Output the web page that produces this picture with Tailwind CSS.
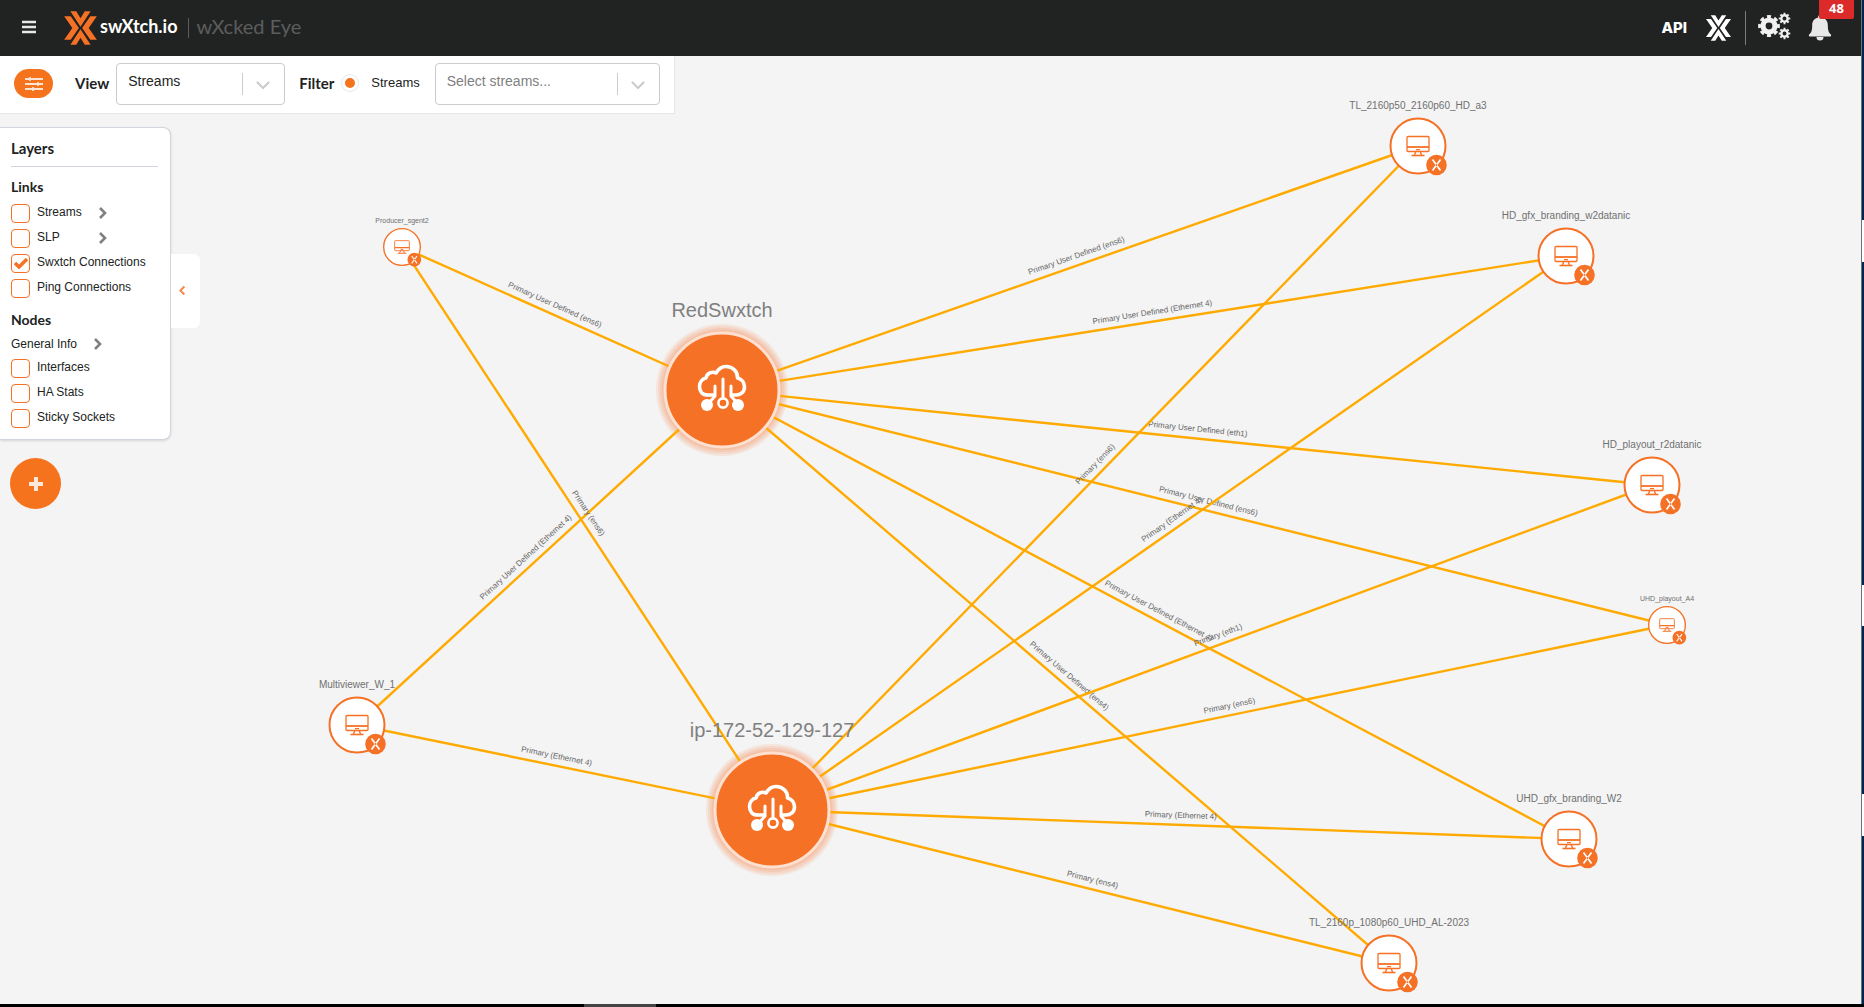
<!DOCTYPE html>
<html lang="en">
  <head>
    <meta charset="UTF-8" />
    <meta name="viewport" content="width=device-width, initial-scale=1.0" />
    <title>swXtch.io | wXcked Eye</title>
    <script src="https://cdn.jsdelivr.net/npm/@tailwindcss/browser@4"></script>
  </head>
  <body
    class="flex flex-col h-screen overflow-hidden bg-[#f4f4f4] text-[#212322] font-['Liberation_Sans',sans-serif]"
  >
    <!-- shared icons -->
    <svg class="hidden">
      <symbol id="logo" viewBox="0 0 100 104">
        <path d="M19 1h18l13 21L63 1h18L50 48z" />
        <path d="M19 103h18l13-21 13 21h18L50 56z" />
        <path d="M0 16h20l25 36-25 36H0l25-36z" />
        <path d="M100 16H80L55 52l25 36h20L75 52z" />
      </symbol>
      <symbol id="chevron" viewBox="0 0 10 14">
        <path d="M2 2l5 5-5 5" fill="none" stroke="currentColor" stroke-width="2.6" />
      </symbol>
      <symbol id="arrow-down" viewBox="0 0 20 20">
        <path
          d="M4.5 7.5l5.5 5.5 5.5-5.5"
          fill="none"
          stroke="currentColor"
          stroke-width="2.2"
          stroke-linecap="round"
        />
      </symbol>
      <symbol id="monitor" viewBox="0 0 24 22">
        <g fill="none" stroke="#f57126">
          <rect x="1" y="1.5" width="22" height="15" rx="1" stroke-width="1.3" />
          <path d="M1 12h22" stroke-width="1.8" />
          <path d="M10 16l-1.5 4M14 16l1.5 4M10 14.6h4" stroke-width="1.4" />
          <path d="M5.5 20.5h13" stroke-width="1.6" />
        </g>
      </symbol>
    </svg>

    <div class="flex flex-1 min-h-0">
      <div class="flex flex-col flex-1 min-w-0">
        <header class="flex items-center h-14 shrink-0 bg-[#212322] text-white pl-[22px] pr-[6px]">
          <button class="mr-7 mb-[2px]" aria-label="Menu">
            <svg class="w-[14px] h-[14px]" viewBox="0 0 14 14" stroke="#e8e8e8" stroke-width="2.6">
              <path d="M0 2h14M0 7h14M0 12h14" />
            </svg>
          </button>
          <svg class="w-[33px] h-[34px] fill-[#f57126]"><use href="#logo" /></svg>
          <span class="ml-[3px] mb-1 text-[18px] font-bold font-['Lato',sans-serif]">swXtch.io</span>
          <span class="ml-[10px] mr-2 w-px h-5 bg-[#5c5d5e]"></span>
          <span class="mb-1 text-[20px] text-[#5c5d5e] font-['Lato',sans-serif]">wXcked Eye</span>

          <div class="flex items-center ml-auto h-full">
            <a href="#" class="text-[15px] font-extrabold font-['Inter',sans-serif]">API</a>
            <svg class="ml-[19px] w-[25px] h-[26px] fill-white"><use href="#logo" /></svg>
            <span class="ml-[14px] mr-3 w-px h-[34px] bg-[#7a7b7b]"></span>
            <button aria-label="Settings">
              <svg class="w-[33px] h-[28px] mb-1" viewBox="0 0 33 28" fill="none" stroke="#f0f0f0">
                <circle cx="11" cy="14" r="6" stroke-width="5.2" />
                <circle cx="11" cy="14" r="9.2" stroke-width="3.4" pathLength="80" stroke-dasharray="5.5 4.5" stroke-dashoffset="2.75" />
                <circle cx="26.5" cy="6.5" r="3.2" stroke-width="2.4" />
                <circle cx="26.5" cy="6.5" r="4.8" stroke-width="2" pathLength="80" stroke-dasharray="5 5" stroke-dashoffset="2.5" />
                <circle cx="26.5" cy="21.5" r="3.2" stroke-width="2.4" />
                <circle cx="26.5" cy="21.5" r="4.8" stroke-width="2" pathLength="80" stroke-dasharray="5 5" stroke-dashoffset="2.5" />
              </svg>
            </button>
            <button class="relative ml-[9px] w-[39px] h-10 mr-4 flex items-center justify-center" aria-label="Notifications">
              <svg class="w-[24px] h-[26px]" viewBox="0 0 24 26" fill="#e8e8e8">
                <path d="M12 0c1 0 1.8.8 1.8 1.8v.7c3.7.8 6 3.7 6 7.5 0 6 1 7.5 3 9.5.5.6.8 2-.8 2H2c-1.6 0-1.3-1.4-.8-2 2-2 3-3.5 3-9.5 0-3.8 2.3-6.7 6-7.5v-.7C10.2.8 11 0 12 0z" />
                <path d="M8.5 22h7a3.5 3.5 0 0 1-7 0z" />
              </svg>
              <span class="absolute -top-2 left-[19px] w-[35px] h-[19px] rounded-b-xs bg-[#dc2a2a] text-[13px] leading-4 font-bold font-['Open_Sans',sans-serif]">48</span>
            </button>
          </div>
        </header>

        <main class="relative flex-1 min-h-0 overflow-hidden">
          <svg id="graph" class="absolute inset-0 w-full h-full">
            <g id="glows"></g>
            <g id="links"></g>
            <g id="nodes"></g>
          </svg>

          <div class="relative inline-flex items-center h-[58px] px-[14px] pb-[2px] bg-white border-b border-r border-gray-200 align-top">
            <button class="flex items-center justify-center w-[39px] h-[29px] rounded-full bg-[#f5731d]" aria-label="Filters">
              <svg class="w-[18px] h-[14px]" viewBox="0 0 18 14" stroke="#fde3d2" stroke-width="1.8">
                <path d="M0 2h18M0 7h18M0 12h18M5 0v4M13 5v4M8 10v4" />
              </svg>
            </button>
            <label for="view" class="ml-[22px] text-[15px] font-bold font-['Lato',sans-serif]">View</label>
            <div class="relative ml-[7px] w-[169px] h-[42px]">
              <select id="view" class="appearance-none w-full h-full pl-[11px] pb-1 rounded border border-[#cccccc] bg-white text-[14px]">
                <option>Streams</option>
              </select>
              <span class="absolute right-[42px] top-[10px] w-px h-[22px] bg-[#cccccc] pointer-events-none"></span>
              <svg class="absolute right-3 top-3 w-5 h-5 text-[#cccccc] pointer-events-none"><use href="#arrow-down" /></svg>
            </div>
            <span class="ml-[14px] text-[15px] font-bold font-['Lato',sans-serif]">Filter</span>
            <input
              id="byStreams"
              type="radio"
              checked
              class="appearance-none ml-2 mb-[2px] w-4 h-4 rounded-full border-3 border-white bg-[#f5731d] ring-1 ring-gray-200"
            />
            <label for="byStreams" class="ml-[13px] mb-[2px] text-[13px]">Streams</label>
            <div class="relative ml-[15px] w-[225px] h-[42px]">
              <select aria-label="Select streams" class="appearance-none w-full h-full pl-[11px] pb-1 rounded border border-[#cccccc] bg-white text-[14px] text-[#808080]">
                <option>Select streams...</option>
              </select>
              <span class="absolute right-[42px] top-[10px] w-px h-[22px] bg-[#cccccc] pointer-events-none"></span>
              <svg class="absolute right-3 top-3 w-5 h-5 text-[#cccccc] pointer-events-none"><use href="#arrow-down" /></svg>
            </div>
          </div>

          <div class="relative flex items-start mt-[13px]">
            <section class="w-[171px] pl-[11px] pr-3 pt-[10px] pb-2 rounded-r-lg bg-white border border-l-0 border-gray-300 shadow text-[12px]">
              <h2 class="pb-2 border-b border-gray-300 text-[15px] leading-5 font-bold font-['Lato',sans-serif]">Layers</h2>
              <h3 class="mt-[10px] mb-1 text-[14px] leading-5 font-bold font-['Lato',sans-serif]">Links</h3>
              <div id="linkLayers"></div>
              <h3 class="mt-[9px] text-[14px] leading-5 font-bold font-['Lato',sans-serif]">Nodes</h3>
              <button class="flex items-center mt-1 mb-[2px] h-5 gap-4">
                General Info
                <svg class="w-[10px] h-[14px] text-[#808080]"><use href="#chevron" /></svg>
              </button>
              <div id="nodeLayers"></div>
            </section>
            <button class="flex items-center justify-center mt-[127px] w-[29px] h-[74px] pr-[7px] pb-[2px] rounded-r-md bg-white" aria-label="Collapse">
              <svg class="w-[8px] h-[11px] rotate-180 text-[#f58a4b]" viewBox="0 0 10 14"><use href="#chevron" /></svg>
            </button>
          </div>

          <button class="relative flex items-center justify-center mt-[18px] ml-[10px] w-[51px] h-[51px] rounded-full bg-[#f5731d]" aria-label="Add">
            <svg class="w-[14px] h-[14px]" viewBox="0 0 14 14" stroke="#fde9dc" stroke-width="4">
              <path d="M0 7h14M7 0v14" />
            </svg>
          </button>
        </main>
      </div>

      <!-- desktop edge -->
      <div class="w-[3px] shrink-0 bg-[#00264d] border-l border-gray-500 flex flex-col">
        <span class="mt-[220px] h-[42px] bg-white"></span>
        <span class="mt-[323px] h-[41px] bg-white"></span>
        <span class="mt-[168px] h-[42px] bg-white"></span>
      </div>
    </div>
    <div class="h-[3px] shrink-0 bg-black pl-[584px]">
      <div class="w-[72px] h-full bg-[#444444]"></div>
    </div>

    <script>
      const linkLayers = [
        { name: "Streams", more: true },
        { name: "SLP", more: true },
        { name: "Swxtch Connections", checked: true },
        { name: "Ping Connections" },
      ];
      const nodeLayers = [
        { name: "Interfaces" },
        { name: "HA Stats" },
        { name: "Sticky Sockets" },
      ];

      const switches = [
        { name: "RedSwxtch", x: 722, y: 334, prefix: "Primary User Defined" },
        { name: "ip-172-52-129-127", x: 772, y: 754, prefix: "Primary" },
      ];
      const agents = [
        { name: "Producer_sgent2", x: 402, y: 191, nic: "ens6", small: true },
        { name: "Multiviewer_W_1", x: 357, y: 669, nic: "Ethernet 4" },
        { name: "TL_2160p50_2160p60_HD_a3", x: 1418, y: 90, nic: "ens6" },
        { name: "HD_gfx_branding_w2datanic", x: 1566, y: 200, nic: "Ethernet 4" },
        { name: "HD_playout_r2datanic", x: 1652, y: 429, nic: "eth1" },
        { name: "UHD_playout_A4", x: 1667, y: 569, nic: "ens6", small: true },
        { name: "UHD_gfx_branding_W2", x: 1569, y: 783, nic: "Ethernet 4" },
        { name: "TL_2160p_1080p60_UHD_AL-2023", x: 1389, y: 907, nic: "ens4" },
      ];

      // Fills a list of layer checkboxes
      function renderLayers(id, layers) {
        document.getElementById(id).innerHTML = layers
          .map(
            (l) => `
          <label class="relative flex items-center h-[25px]">
            <input type="checkbox" ${l.checked ? "checked" : ""}
              class="peer appearance-none w-[19px] h-[19px] rounded border border-[#f57126] bg-[#fffdfc]" />
            <svg class="hidden peer-checked:block absolute left-[3px] top-[7px] w-[14px] h-[11px]" viewBox="0 0 14 11">
              <path d="M1 5l4 4 8-8" fill="none" stroke="#f57126" stroke-width="3.4" />
            </svg>
            <span class="ml-[7px] mb-[3px] ${l.more ? "w-[61px]" : ""}">${l.name}</span>
            ${l.more ? '<svg class="w-[10px] h-[14px] mb-[2px] text-[#808080]"><use href="#chevron" /></svg>' : ""}
          </label>`
          )
          .join("");
      }

      // Link line and its label, which runs along the line a bit above it
      function renderLink(sw, agent) {
        const [a, b] = sw.x < agent.x ? [sw, agent] : [agent, sw];
        const angle = Math.atan2(b.y - a.y, b.x - a.x);
        const shift = (agent.small ? 12 : 10) * (agent === b ? 1 : -1);
        const cx = (a.x + b.x) / 2;
        const cy = (a.y + b.y) / 2;
        const deg = (angle * 180) / Math.PI;
        return `
          <line x1="${a.x}" y1="${a.y}" x2="${b.x}" y2="${b.y}" stroke="#ffaa00" stroke-width="2.4" />
          <text transform="translate(${cx} ${cy}) rotate(${deg})" x="${shift}" y="-7"
            text-anchor="middle" class="text-[8px] fill-[#666666]">${sw.prefix} (${agent.nic})</text>`;
      }

      function renderSwitch(n) {
        return `
          <g transform="translate(${n.x} ${n.y})">
            <circle r="57" fill="#f57126" stroke="#fde0d0" stroke-width="3" />
            <g fill="none" stroke="#fff" stroke-width="3.6" stroke-linecap="round" stroke-linejoin="round">
              <path d="M-8 5H-14C-20 5-22.5 1-22.5-3.5-22.5-8-19.5-11.5-16-12-15-17-10-19-6-17-3-22 1-23.5 4-23.5 11-23.5 16-18 15.5-12 20-11 22.5-7 22.5-3 22.5 2 18.5 5 14 5H10" />
              <path d="M-7-4V6l-7 8M9-4V6l7 8M1-11V7" stroke-width="3" />
              <circle cx="1" cy="13" r="4.6" stroke-width="2.6" />
            </g>
            <circle cx="-15" cy="15" r="6" fill="#fff" />
            <circle cx="16" cy="15" r="6" fill="#fff" />
            <text y="-73" text-anchor="middle" class="text-[20px] fill-[#808080]">${n.name}</text>
          </g>`;
      }

      // Rings that fade out around a switch
      function renderGlow(n) {
        return [66, 64, 62, 60]
          .map((r) => `<circle cx="${n.x}" cy="${n.y}" r="${r}" fill="#f57126" fill-opacity="0.11" />`)
          .join("");
      }

      function renderAgent(n) {
        return `
          <g transform="translate(${n.x} ${n.y})">
            <g transform="scale(${n.small ? 0.667 : 1})">
              <circle r="27.5" fill="#fff" stroke="#f57126" stroke-width="2" />
              <use href="#monitor" x="-12" y="-11" width="24" height="22" />
              <circle cx="18.5" cy="19" r="10.3" fill="#f57126" />
              <path d="M14.500 13.500l8 11M22.500 13.500l-8 11" fill="none" stroke="#fff" stroke-width="1.7" />
              <circle cx="18.5" cy="19" r="0.9" fill="#f57126" />
            </g>
            <text y="${n.small ? -24 : -37}" text-anchor="middle"
              class="${n.small ? "text-[7px]" : "text-[10px]"} fill-[#707070]">${n.name}</text>
          </g>`;
      }

      renderLayers("linkLayers", linkLayers);
      renderLayers("nodeLayers", nodeLayers);
      document.getElementById("glows").innerHTML = switches.map(renderGlow).join("");
      document.getElementById("links").innerHTML = switches
        .flatMap((sw) => agents.map((agent) => renderLink(sw, agent)))
        .join("");
      document.getElementById("nodes").innerHTML =
        switches.map(renderSwitch).join("") + agents.map(renderAgent).join("");
    </script>
  </body>
</html>
